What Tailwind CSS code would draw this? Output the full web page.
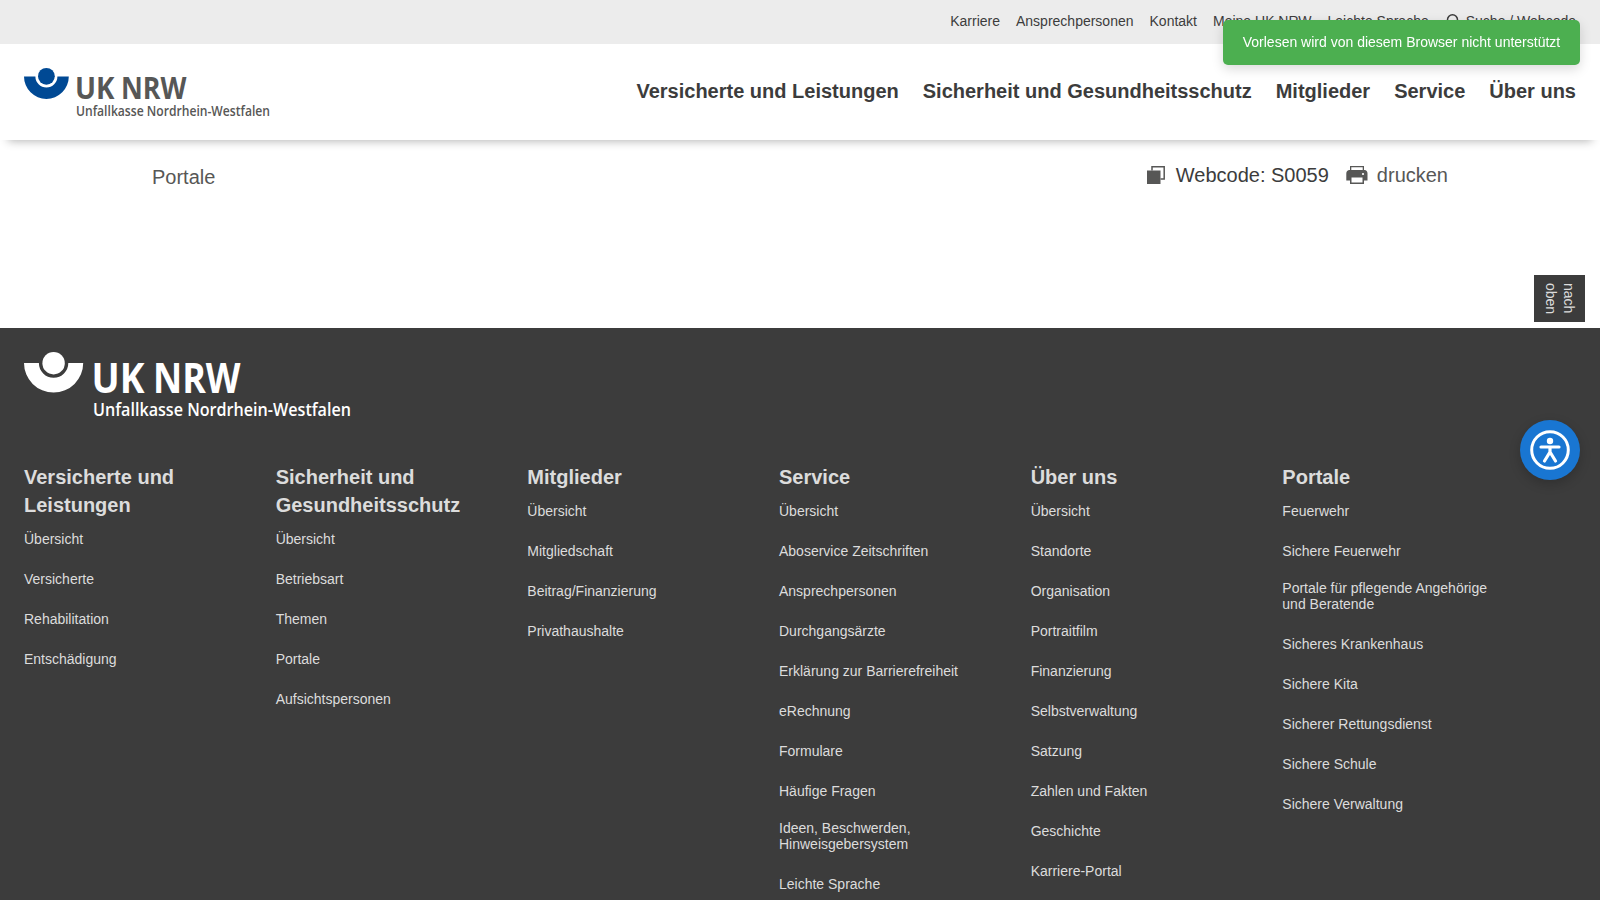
<!DOCTYPE html>
<html lang="de">

<head>
    <meta charset="utf-8">
    <title>Portale | UK NRW</title>
    <script src="https://cdn.jsdelivr.net/npm/@tailwindcss/browser@4"></script>
</head>

<body class="flex h-screen flex-col overflow-hidden bg-white font-['Liberation_Sans',Arial,sans-serif] text-[#3c3c3c]">
    <!-- Meta navigation -->
    <nav class="flex h-11 shrink-0 items-center justify-end gap-4 bg-[#ececec] px-6 pb-0.5 text-sm">
        <a href="#">Karriere</a>
        <a href="#">Ansprechpersonen</a>
        <a href="#">Kontakt</a>
        <a href="#">Meine UK NRW</a>
        <a href="#">Leichte Sprache</a>
        <a href="#" class="flex items-center gap-[5px]">
            <svg class="size-4" viewBox="0 0 16 16" fill="none" stroke="currentColor" stroke-width="1.5">
                <circle cx="7.5" cy="6.7" r="5" />
                <path d="M4 10.5 1 14.5" />
            </svg>
            Suche / Webcode
        </a>
    </nav>

    <!-- Header -->
    <header class="flex h-24 shrink-0 items-start justify-between bg-white px-6 shadow-[0_9px_9px_-8px_rgba(0,0,0,0.3)]">
        <svg class="mt-6 h-[54px] w-[250px] overflow-visible" viewBox="0 0 250 54">
            <path d="M0 8.5H11.4A11 11 0 0 0 33.4 8.5H44.8A22.4 22.4 0 0 1 0 8.5Z" fill="#004994" />
            <circle cx="22.4" cy="8.3" r="8.4" fill="#004994" />
            <g fill="#575756" class="font-['Open_Sans',sans-serif]">
                <text x="51" y="31" textLength="39.5" lengthAdjust="spacingAndGlyphs" class="text-[31px] font-bold">UK</text>
                <text x="97" y="31" textLength="65.5" lengthAdjust="spacingAndGlyphs" class="text-[31px] font-bold">NRW</text>
                <text x="52" y="48" textLength="194" lengthAdjust="spacingAndGlyphs" class="text-[14px] font-semibold">Unfallkasse Nordrhein-Westfalen</text>
            </g>
        </svg>
        <nav class="flex gap-6 pt-[33px] text-xl font-bold">
            <a href="#">Versicherte und Leistungen</a>
            <a href="#">Sicherheit und Gesundheitsschutz</a>
            <a href="#">Mitglieder</a>
            <a href="#">Service</a>
            <a href="#">Über uns</a>
        </nav>
    </header>

    <!-- Breadcrumb and page tools -->
    <main class="flex h-[188px] shrink-0 items-start justify-between px-[152px] pt-[21px] text-xl text-[#575756]">
        <span class="pt-0.5">Portale</span>
        <div class="flex">
            <span class="flex items-center text-[#3c3c3c]">
                <svg class="mr-[11px] size-[18px]" viewBox="0 0 18 18">
                    <path d="M0 4.5H13.5V18H0Z" fill="#575756" />
                    <path d="M5 4.5V.8H17.2V13H13.5" fill="none" stroke="#575756" stroke-width="1.5" />
                </svg>
                Webcode: S0059
            </span>
            <a href="#" class="ml-[17px] flex items-center">
                <svg class="mr-[9px] h-[18px] w-[22px]" viewBox="0 0 22 18">
                    <path d="M4 0H18V4H19Q21.5 4.5 21.5 7.5V14.5H18V18H4V14.5H.3V7.5Q.3 4.5 3 4H4Z" fill="#575756" />
                    <path d="M5.3 1.3H16.7V4H5.3ZM5.5 11.5H16.5V16.5H5.5Z" fill="#fff" />
                    <circle cx="17" cy="8" r="1.1" fill="#fff" />
                </svg>
                drucken
            </a>
        </div>
    </main>

    <!-- Footer -->
    <footer class="min-h-0 flex-1 overflow-hidden bg-[#3c3c3c] px-6 pt-6 text-[#dcdcdc]">
        <svg class="h-[70px] w-[330px] overflow-visible" viewBox="0 0 330 70" fill="#fff">
            <path d="M0 11H14.9A14.7 14.7 0 0 0 44.3 11H59.2A29.6 29.6 0 0 1 0 11Z" />
            <circle cx="29.6" cy="11.2" r="11.2" />
            <g class="font-['Open_Sans',sans-serif]">
                <text x="67.5" y="40.5" textLength="53" lengthAdjust="spacingAndGlyphs" class="text-[41px] font-bold">UK</text>
                <text x="129" y="40.5" textLength="87.5" lengthAdjust="spacingAndGlyphs" class="text-[41px] font-bold">NRW</text>
                <text x="69" y="63.5" textLength="258" lengthAdjust="spacingAndGlyphs" class="text-[18px] font-semibold">Unfallkasse Nordrhein-Westfalen</text>
            </g>
        </svg>
        <div class="mt-[41px] grid w-[1510px] grid-cols-6 text-sm/4">
            <div>
                <h2 class="w-48 text-xl/7 font-bold">Versicherte und Leistungen</h2>
                <ul>
                    <li class="py-3"><a href="#">Übersicht</a></li>
                    <li class="py-3"><a href="#">Versicherte</a></li>
                    <li class="py-3"><a href="#">Rehabilitation</a></li>
                    <li class="py-3"><a href="#">Entschädigung</a></li>
                </ul>
            </div>
            <div>
                <h2 class="w-48 text-xl/7 font-bold">Sicherheit und Gesundheitsschutz</h2>
                <ul>
                    <li class="py-3"><a href="#">Übersicht</a></li>
                    <li class="py-3"><a href="#">Betriebsart</a></li>
                    <li class="py-3"><a href="#">Themen</a></li>
                    <li class="py-3"><a href="#">Portale</a></li>
                    <li class="py-3"><a href="#">Aufsichtspersonen</a></li>
                </ul>
            </div>
            <div>
                <h2 class="text-xl/7 font-bold">Mitglieder</h2>
                <ul>
                    <li class="py-3"><a href="#">Übersicht</a></li>
                    <li class="py-3"><a href="#">Mitgliedschaft</a></li>
                    <li class="py-3"><a href="#">Beitrag/Finanzierung</a></li>
                    <li class="py-3"><a href="#">Privathaushalte</a></li>
                </ul>
            </div>
            <div>
                <h2 class="text-xl/7 font-bold">Service</h2>
                <ul>
                    <li class="py-3"><a href="#">Übersicht</a></li>
                    <li class="py-3"><a href="#">Aboservice Zeitschriften</a></li>
                    <li class="py-3"><a href="#">Ansprechpersonen</a></li>
                    <li class="py-3"><a href="#">Durchgangsärzte</a></li>
                    <li class="py-3"><a href="#">Erklärung zur Barrierefreiheit</a></li>
                    <li class="py-3"><a href="#">eRechnung</a></li>
                    <li class="py-3"><a href="#">Formulare</a></li>
                    <li class="py-3"><a href="#">Häufige Fragen</a></li>
                    <li class="pt-[9px] pb-3"><a href="#">Ideen, Beschwerden,<br>Hinweisgebersystem</a></li>
                    <li class="pt-3"><a href="#">Leichte Sprache</a></li>
                </ul>
            </div>
            <div>
                <h2 class="text-xl/7 font-bold">Über uns</h2>
                <ul>
                    <li class="py-3"><a href="#">Übersicht</a></li>
                    <li class="py-3"><a href="#">Standorte</a></li>
                    <li class="py-3"><a href="#">Organisation</a></li>
                    <li class="py-3"><a href="#">Portraitfilm</a></li>
                    <li class="py-3"><a href="#">Finanzierung</a></li>
                    <li class="py-3"><a href="#">Selbstverwaltung</a></li>
                    <li class="py-3"><a href="#">Satzung</a></li>
                    <li class="py-3"><a href="#">Zahlen und Fakten</a></li>
                    <li class="py-3"><a href="#">Geschichte</a></li>
                    <li class="pt-3"><a href="#">Karriere-Portal</a></li>
                </ul>
            </div>
            <div>
                <h2 class="text-xl/7 font-bold">Portale</h2>
                <ul>
                    <li class="py-3"><a href="#">Feuerwehr</a></li>
                    <li class="py-3"><a href="#">Sichere Feuerwehr</a></li>
                    <li class="pt-[9px] pb-3"><a href="#">Portale für pflegende Angehörige<br>und Beratende</a></li>
                    <li class="py-3"><a href="#">Sicheres Krankenhaus</a></li>
                    <li class="py-3"><a href="#">Sichere Kita</a></li>
                    <li class="py-3"><a href="#">Sicherer Rettungsdienst</a></li>
                    <li class="py-3"><a href="#">Sichere Schule</a></li>
                    <li class="py-3"><a href="#">Sichere Verwaltung</a></li>
                </ul>
            </div>
        </div>
    </footer>

    <!-- Floating elements -->
    <a href="#" class="fixed top-[275px] right-[15px] flex h-[47px] w-[51px] items-center justify-center bg-[#3c3c3c] text-sm/[18px] text-[#dcdcdc] [writing-mode:vertical-rl]"><span>nach<br>oben</span></a>
    <button class="fixed top-[420px] right-5 flex size-15 items-center justify-center rounded-full bg-[#1976d2] shadow-[0_4px_12px_rgba(0,0,0,0.2)]">
        <svg class="size-10" viewBox="0 0 40 40" fill="none" stroke="#fff" stroke-linecap="round" stroke-linejoin="round">
            <circle cx="20" cy="20" r="18.3" stroke-width="3" />
            <circle cx="20" cy="11" r="3.2" fill="#fff" stroke="none" />
            <path d="M11 17H29M20 17V22L14.5 31M20 22L25.5 31" stroke-width="3.2" />
        </svg>
    </button>
    <div class="fixed top-5 right-5 h-[45px] w-[357px] rounded-[5px] bg-[#4caf50] pt-3 text-center text-sm text-white shadow-[0_4px_12px_rgba(0,0,0,0.15)]">Vorlesen wird von diesem Browser nicht unterstützt</div>
</body>

</html>
